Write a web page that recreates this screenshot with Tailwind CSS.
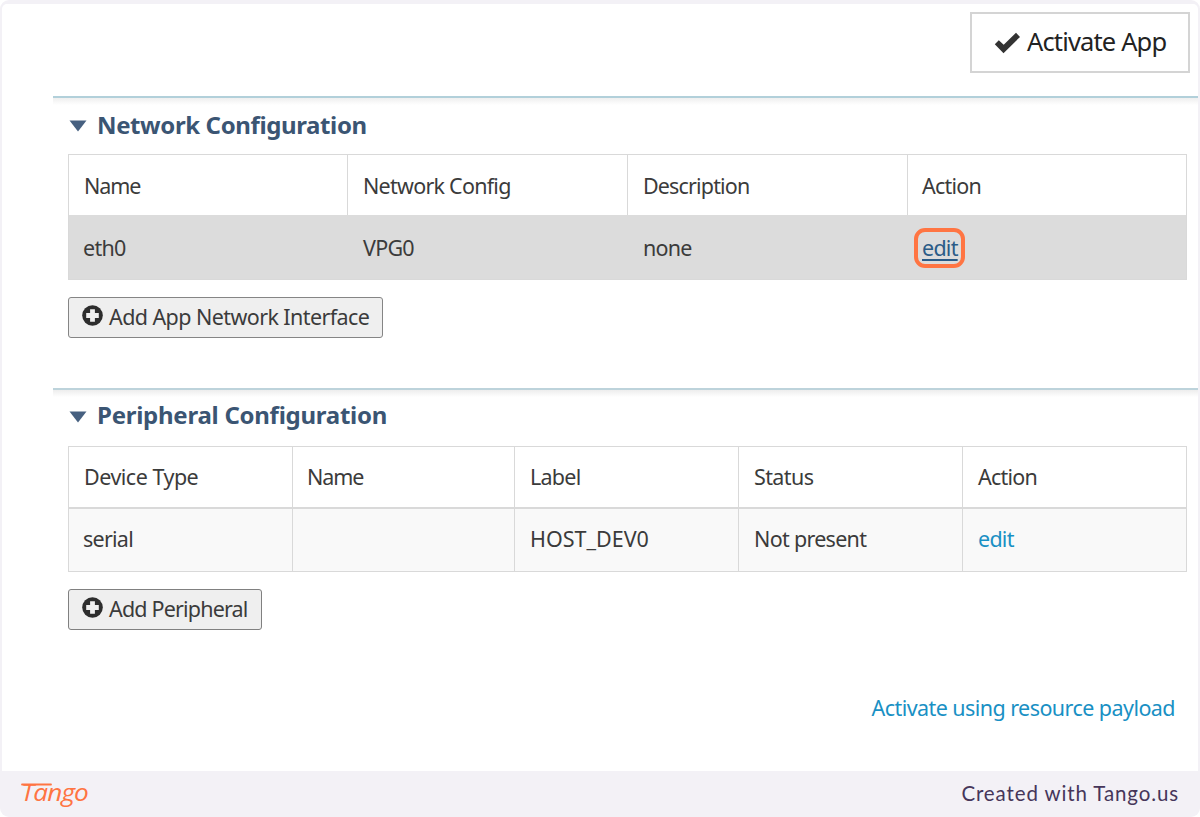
<!DOCTYPE html>
<html lang="en">
<head>
<meta charset="utf-8">
<title>App Configuration</title>
<script src="https://cdn.jsdelivr.net/npm/@tailwindcss/browser@4"></script>
</head>
<body class="bg-white">
<div class="flex h-[817px] w-[1200px] flex-col overflow-hidden rounded-[9px] bg-[#f3f1f6] font-['Noto_Sans',sans-serif] text-[21.5px] leading-[30px] tracking-[-0.75px] text-[#3b3b3b]">
  <main class="mx-[2px] mt-[4px] h-[767px] rounded-t-[5px] bg-white pl-[51px]">
    <div class="flex h-[92px] items-start justify-end pt-[8px] pr-[8px]">
      <button class="flex h-[61px] w-[220px] items-center border-2 border-[#d4d4d4] pl-[22px] text-[25.5px] text-[#222]">
        <svg class="mr-[6px] h-[22px] w-[27px] shrink-0" viewBox="0 0 27 22"><path d="M0.8 12.2 4.8 8.2 9.7 12.8 22 0.8 26 4.9 9.5 21.2Z" fill="#333"/></svg>
        <span class="-mt-[3px] tracking-[-0.85px] whitespace-nowrap">Activate App</span>
      </button>
    </div>

    <section class="h-[292px] border-t-2 border-[#b2d0da] bg-linear-to-b from-[#efefef] to-white to-[7px] pl-[15px]">
      <h2 class="flex h-[56px] items-center text-[24px] font-bold text-[#3b5573]">
        <svg class="mr-[10px] ml-[1px] h-[12px] w-[18px] shrink-0" viewBox="0 0 18 12"><path d="M0.5 0.5H17.5L9 11.5Z" fill="#466080"/></svg>
        <span class="-mt-[2px] tracking-[-0.38px]">Network Configuration</span>
      </h2>
      <div class="h-[126px] w-[1119px] border border-[#d9d9d9]">
        <div class="grid h-[60px] grid-cols-[279px_280px_280px_1fr] divide-x divide-[#d9d9d9] *:flex *:items-center *:pt-[1px] *:pl-[15px]">
          <div class="tracking-[-1.1px]">Name</div><div>Network Config</div><div class="tracking-[-0.85px]">Description</div><div class="pl-[14px]!">Action</div>
        </div>
        <div class="grid h-[64px] grid-cols-[279px_280px_280px_1fr] bg-[#dcdcdc] *:flex *:items-center *:pt-[1px] *:pl-[15px]">
          <div class="pl-[14px]!">eth0</div><div>VPG0</div><div>none</div>
          <div class="pl-[14px]!"><a class="relative text-[#2a5b87] underline decoration-[1.5px] underline-offset-[3px]">edit<span class="absolute -top-[5px] -left-[8px] h-[40px] w-[51px] rounded-[11px] border-4 border-[#ff7543]"></span></a></div>
        </div>
      </div>
      <button class="mt-[17px] flex h-[41px] w-[315px] items-center rounded-[3px] border-[1.5px] border-[#858585] bg-[#efefef] pl-[13px] whitespace-nowrap">
        <svg class="mr-[6px] h-[21px] w-[21px] shrink-0 -translate-y-[2px]" viewBox="0 0 21 21"><circle cx="10.5" cy="10.5" r="10.3" fill="#2d2d2d"/><path d="M8.1 4.2h4.8v3.9h3.9v4.8h-3.9v3.9H8.1v-3.9H4.2V8.1h3.9Z" fill="#efefef"/></svg>
        <span class="-mt-[1px] tracking-[-0.58px]">Add App Network Interface</span>
      </button>
    </section>

    <section class="h-[292px] border-t-2 border-[#bdd3db] bg-linear-to-b from-[#ededed] to-white to-[7px] pl-[15px]">
      <h2 class="flex h-[54px] items-center text-[24px] font-bold text-[#3b5573]">
        <svg class="mr-[10px] ml-[1px] h-[12px] w-[18px] shrink-0" viewBox="0 0 18 12"><path d="M0.5 0.5H17.5L9 11.5Z" fill="#466080"/></svg>
        <span class="-mt-[4px] tracking-[-0.26px]">Peripheral Configuration</span>
      </h2>
      <div class="mt-[2px] h-[126px] w-[1119px] border border-[#d9d9d9]">
        <div class="grid h-[62px] grid-cols-[224px_222px_224px_224px_1fr] divide-x divide-[#d9d9d9] border-b-2 border-[#d9d9d9] *:flex *:items-center *:pl-[15px]">
          <div class="tracking-[-0.5px]">Device Type</div><div class="pl-[14px]! tracking-[-1.1px]">Name</div><div>Label</div><div class="tracking-[-0.6px]">Status</div><div>Action</div>
        </div>
        <div class="grid h-[62px] grid-cols-[224px_222px_224px_224px_1fr] divide-x divide-[#d9d9d9] bg-[#f9f9f9] *:flex *:items-center *:pb-[3px] *:pl-[15px]">
          <div class="pl-[14px]!">serial</div><div></div><div class="tracking-[0px]">HOST_DEV0</div><div class="tracking-[-0.7px]">Not present</div><div class="text-[#1990c4]">edit</div>
        </div>
      </div>
      <button class="mt-[17px] flex h-[41px] w-[194px] items-center rounded-[3px] border-[1.5px] border-[#808080] bg-[#efefef] pl-[13px] whitespace-nowrap">
        <svg class="mr-[6px] h-[21px] w-[21px] shrink-0 -translate-y-[2px]" viewBox="0 0 21 21"><circle cx="10.5" cy="10.5" r="10.3" fill="#2d2d2d"/><path d="M8.1 4.2h4.8v3.9h3.9v4.8h-3.9v3.9H8.1v-3.9H4.2V8.1h3.9Z" fill="#efefef"/></svg>
        <span class="-mt-[1px] tracking-[-0.82px]">Add Peripheral</span>
      </button>
    </section>

    <div class="flex justify-end pt-[13px] pr-[23px] tracking-[-0.56px] text-[#1990c4]"><a>Activate using resource payload</a></div>
  </main>
  <footer class="flex h-[46px] items-center justify-between pr-[21px] pl-[18px] font-['Lato',sans-serif] text-[20px] text-[#46365a]">
    <svg class="h-[40px] w-[76px]" viewBox="0 0 76 40" aria-label="Tango">
      <text x="3" y="27" textLength="67" lengthAdjust="spacingAndGlyphs" font-family="Open Sans, Noto Sans, sans-serif" font-style="italic" font-weight="400" font-size="23" fill="#ff7442">Tango</text>
      <path d="M4 10.5H33" stroke="#ff7442" stroke-width="1.8" stroke-linecap="round"/>
    </svg>
    <span class="-mt-[2px] text-[20.5px] tracking-[0.88px]">Created with Tango.us</span>
  </footer>
</div>
</body>
</html>
